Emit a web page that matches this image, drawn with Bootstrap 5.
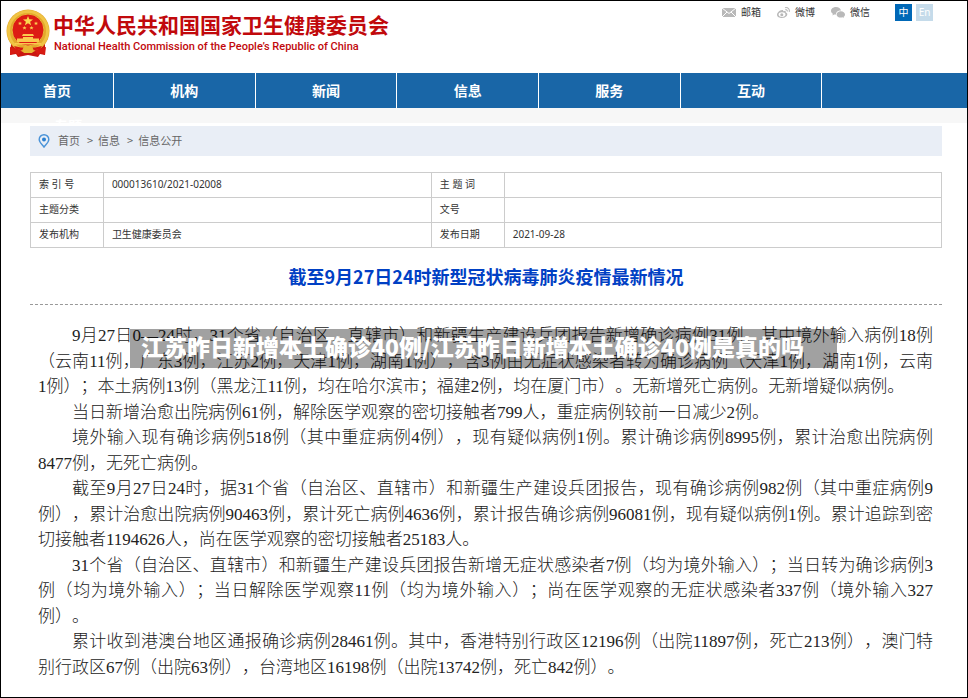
<!DOCTYPE html>
<html lang="zh-CN">
<head>
<meta charset="utf-8">
<meta name="viewport" content="width=device-width, initial-scale=1">
<title>截至9月27日24时新型冠状病毒肺炎疫情最新情况</title>
<link href="https://cdn.jsdelivr.net/npm/bootstrap@5.3.0/dist/css/bootstrap.min.css" rel="stylesheet">
<style>
body{font-family:"Noto Sans","Noto Sans CJK SC",sans-serif;font-size:10px;color:#333;background:#fff;text-spacing-trim:space-all}
a{color:inherit;text-decoration:none}
.page-frame{border:1px solid #000;min-height:100vh}
.site-head{height:72px}
.brand-link{padding:8px 0 0 5px;gap:3px;color:#c1090c}
.brand-cn{font:700 21px/26px "Noto Sans CJK SC",sans-serif;padding-top:2px}
.brand-en{font:500 11px/14px Roboto,"Liberation Sans",sans-serif;padding:3px 0 0 1px}
.tools{padding:3px 34px 0 0;line-height:17px}
.tool-link{gap:5px;margin-right:16px;height:17px}
.lang-btn{width:17px;height:17px;border:0;padding:0;color:#fff;background:#0068b7;font-size:10px;line-height:17px;text-align:center}
.lang-btn.off{background:#c5dbea;margin-left:4px}
.lang-btn:not(.off){margin-left:9px}
.main-nav{background:#1966a7;color:#fff;height:35px;font:700 14px/35px "Noto Sans CJK SC",sans-serif}
.main-nav a{flex:142 1 0;text-align:center;border-right:1px solid #fff}
.main-nav a:first-child{flex-grow:113}
.main-nav span{flex:146 1 0}
.sub-nav{height:15px;background:#f7f7f7;color:#fff;overflow:hidden;padding:7px 0 0 53px;font:700 14px/20px "Noto Sans CJK SC",sans-serif}
.content{padding:3px 25px 0 29px}
.crumbs{height:30px;background:#e9eef6;padding-left:8px;font:11px/28px "Noto Sans CJK SC",sans-serif;color:#666}
.crumbs a,.crumbs span{height:30px}
.crumbs svg{margin-right:8px}
.crumbs .sep{margin:0 5px 0 7px}
.meta-table{table-layout:fixed;margin:16px 0 0;border-collapse:collapse;width:100%}
.meta-table th,.meta-table td{border:1px solid #ccc;height:25px;padding:0 8px 2px;line-height:22px;font-weight:400;color:#333;vertical-align:middle}
.c-label{width:8%}.c-mid{width:36%}
.doc-title{font:700 18px/26px "Noto Sans CJK SC",sans-serif;color:#0040c4;margin:15px 0 0;padding-bottom:15px}
.rule{border-top:1px dashed #999}
.article{padding:18px 9px 15px 8px;font:300 17px/1.5 "Liberation Serif","Noto Sans CJK SC",serif;color:#222;text-align:justify}
.article p{margin:0;text-indent:2em}
.caption-band{position:absolute;left:100px;top:24px;height:39px;padding:0 33px 0 11px;background:rgba(0,0,0,.37);color:#fff;font:900 23px/35px "Noto Sans CJK SC",sans-serif;white-space:nowrap}
</style>
<script src="https://cdn.jsdelivr.net/npm/bootstrap@5.3.0/dist/js/bootstrap.bundle.min.js"></script>
</head>
<body>
<div class="page-frame">
<header class="site-head d-flex justify-content-between align-items-start">
  <a href="#" class="brand-link d-flex">
    <svg width="44" height="48" viewBox="0 0 44 48" aria-hidden="true">
      <path d="M5 35l-1 11 6-1 2 3 10-2 10 2 2-3 5 1 0-11z" fill="#c9160f"/>
      <circle cx="22" cy="22" r="21.500" fill="#e2a92b"/>
      <circle cx="22" cy="22" r="19.500" fill="none" stroke="#f0c445" stroke-width="3"/>
      <circle cx="22" cy="21" r="16" fill="#dd1b14" stroke="#e9b636"/>
      <path d="M22 7l1.300 3.300 3.700.2-2.900 2.200 1 3.500-3.100-2-3.100 2 1-3.500-2.900-2.200 3.700-.2z" fill="#fbd94f"/>
      <g fill="#fbc94f"><path d="M14 12.500l.6 1.200 1.400.1-1 .9.300 1.300-1.300-.7-1.300.7.300-1.300-1-.9 1.400-.1z"/><path d="M30 12.500l.6 1.200 1.400.1-1 .9.300 1.300-1.300-.7-1.300.7.300-1.300-1-.9 1.400-.1z"/><path d="M18.500 17l.6 1.200 1.400.1-1 .9.300 1.300-1.300-.7-1.300.7.300-1.300-1-.9 1.400-.1z"/><path d="M25.500 17l.6 1.200 1.400.1-1 .9.300 1.300-1.300-.7-1.300.7.300-1.300-1-.9 1.400-.1z"/>
      <path d="M17 25h10l1 2H16zM17 28h10v1.500h6V33h-22v-3.500h6zM9 34h26v1.500H9z"/></g>
      <path d="M8 37q14 4 28 0l-2 3q-12 4-24 0z" fill="#d71a12"/>
      <path d="M18 37h8l2 5-2 2h-8l-2-2z" fill="#e9b431"/>
      <path d="M4 38l11 3-2 5-4-2-5 2zM40 38l-11 3 2 5 4-2 4 2z" fill="#d71a12"/>
    </svg>
    <span class="d-flex flex-column"><span class="brand-cn">中华人民共和国国家卫生健康委员会</span><span class="brand-en">National Health Commission of the People’s Republic of China</span></span>
  </a>
  <div class="tools d-flex">
    <a href="#" class="tool-link d-flex align-items-center"><svg width="14" height="9" viewBox="0 0 14 9" aria-hidden="true"><path d="M0 0h14v9H0z" fill="#b9b9b9"/><path d="M0 0l7 5.500L14 0M0 9l5-5M14 9L9 4" fill="none" stroke="#fff"/></svg>邮箱</a>
    <a href="#" class="tool-link d-flex align-items-center"><svg width="13" height="11" viewBox="0 0 13 11" aria-hidden="true"><path d="M5 3C2.500 3.300 0 5.800 0 7.700 0 9.800 2.500 11 5 11c3 0 5.300-1.800 5.300-3.700 0-1.200-.8-1.700-1.500-1.900.4-1.500-.8-1.900-2.700-1.100C6.400 3.400 6 2.900 5 3z" fill="#b9b9b9"/><ellipse cx="5" cy="7.600" rx="3.400" ry="2.300" fill="#fff"/><circle cx="4.800" cy="7.700" r="1.500" fill="#b9b9b9"/><path d="M8 .7c3-.7 5 1.600 4.200 4.200M8.300 2.700c1.400-.3 2.200.6 1.900 1.800" fill="none" stroke="#b9b9b9" stroke-width="1.100"/></svg>微博</a>
    <a href="#" class="tool-link d-flex align-items-center"><svg width="14" height="11" viewBox="0 0 14 11" aria-hidden="true"><path d="M5 0c2.700 0 4.700 1.600 5 3.500C7 3.400 4.800 5 5 7.600c-.7 0-1.300 0-1.800-.2L1.400 8.400l.5-1.700C.7 6 0 5 0 3.900 0 1.700 2.300 0 5 0z" fill="#b9b9b9"/><path d="M9.800 4.200c2.300 0 4.200 1.400 4.200 3.200 0 1-.6 1.900-1.500 2.500l.4 1.100-1.500-.7c-3 .8-5.800-.7-5.800-2.900 0-1.800 1.900-3.200 4.200-3.200z" fill="#b9b9b9"/></svg>微信</a>
    <button type="button" class="lang-btn">中</button><button type="button" class="lang-btn off">En</button>
  </div>
</header>
<nav class="main-nav d-flex"><a href="#">首页</a><a href="#">机构</a><a href="#">新闻</a><a href="#">信息</a><a href="#">服务</a><a href="#">互动</a><span></span></nav>
<div class="sub-nav"><a href="#">专题</a></div>
<main class="content">
  <nav class="crumbs d-flex align-items-center" aria-label="当前位置"><svg width="12" height="14" viewBox="0 0 12 14" aria-hidden="true"><path d="M6 .8C3.200.8 1.200 2.800 1.200 5.400c0 2.700 2.600 4.700 4.800 7.700 2.200-3 4.800-5 4.800-7.700C10.800 2.800 8.800.8 6 .8z" fill="none" stroke="#4a93d8" stroke-width="1.400"/><circle cx="6" cy="5.500" r="2" fill="#2a7fd0"/></svg><a href="#">首页</a><span class="sep">&gt;</span><a href="#">信息</a><span class="sep">&gt;</span><a href="#">信息公开</a></nav>
  <table class="meta-table">
    <colgroup><col class="c-label"><col class="c-mid"><col class="c-label"><col></colgroup>
    <tbody>
    <tr><th scope="row">索 引 号</th><td>000013610/2021-02008</td><th scope="row">主 题 词</th><td></td></tr>
    <tr><th scope="row">主题分类</th><td></td><th scope="row">文号</th><td></td></tr>
    <tr><th scope="row">发布机构</th><td>卫生健康委员会</td><th scope="row">发布日期</th><td>2021-09-28</td></tr>
    </tbody>
  </table>
  <h1 class="doc-title text-center">截至9月27日24时新型冠状病毒肺炎疫情最新情况</h1>
  <div class="rule"></div>
  <article class="article position-relative">
    <p>9月27日0—24时，31个省（自治区、直辖市）和新疆生产建设兵团报告新增确诊病例31例，其中境外输入病例18例（云南11例，广东3例，江苏2例，天津1例，湖南1例），含3例由无症状感染者转为确诊病例（天津1例，湖南1例，云南1例）；本土病例13例（黑龙江11例，均在哈尔滨市；福建2例，均在厦门市）。无新增死亡病例。无新增疑似病例。</p>
    <p>当日新增治愈出院病例61例，解除医学观察的密切接触者799人，重症病例较前一日减少2例。</p>
    <p>境外输入现有确诊病例518例（其中重症病例4例），现有疑似病例1例。累计确诊病例8995例，累计治愈出院病例8477例，无死亡病例。</p>
    <p>截至9月27日24时，据31个省（自治区、直辖市）和新疆生产建设兵团报告，现有确诊病例982例（其中重症病例9例），累计治愈出院病例90463例，累计死亡病例4636例，累计报告确诊病例96081例，现有疑似病例1例。累计追踪到密切接触者1194626人，尚在医学观察的密切接触者25183人。</p>
    <p>31个省（自治区、直辖市）和新疆生产建设兵团报告新增无症状感染者7例（均为境外输入）；当日转为确诊病例3例（均为境外输入）；当日解除医学观察11例（均为境外输入）；尚在医学观察的无症状感染者337例（境外输入327例）。</p>
    <p>累计收到港澳台地区通报确诊病例28461例。其中，香港特别行政区12196例（出院11897例，死亡213例），澳门特别行政区67例（出院63例），台湾地区16198例（出院13742例，死亡842例）。</p>
    <div class="caption-band">江苏昨日新增本土确诊40例/江苏昨日新增本土确诊40例是真的吗</div>
  </article>
</main>
</div>
</body>
</html>
